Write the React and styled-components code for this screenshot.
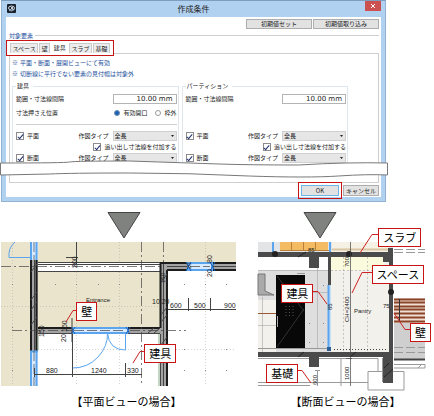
import React, { useState } from 'react';
import styled, { createGlobalStyle } from 'styled-components';

// =======================
// GLOBAL
// =======================
const GlobalStyle = createGlobalStyle`
    * { box-sizing: border-box; }

    body {
        margin: 0;
        background: #fff;
        color: #222;
        font-family: "Noto Sans CJK JP", sans-serif;
        font-size: 6px;
    }

    button, input, select { font: inherit; color: inherit; margin: 0; }
`;

const Page = styled.main`
    overflow: hidden;
`;

// =======================
// DIALOG
// =======================
const Dialog = styled.section`
    position: relative;
    margin: 0 48px 0 1px;
    padding: 0 4px 4px;
    background: #b1d1f0;
    border: 1px solid #93b3d3;
    border-top-color: #7f9dbd;
`;

const TitleBar = styled.header`
    display: grid;
    grid-template-columns: 16px 1fr 16px;
    align-items: start;
    height: 16px;
`;

const Title = styled.h1`
    margin: 0;
    text-align: center;
    font-size: 8px;
    font-weight: 400;
    line-height: 15px;
`;

const AppIcon = styled.svg`
    width: 9px;
    height: 9px;
    margin: 3px 1px;
`;

const CloseButton = styled.button`
    display: flex;
    align-items: center;
    justify-content: center;
    height: 10px;
    padding: 0;
    border: 0;
    background: #cb5050;

    svg { width: 4px; height: 4px; }
`;

const Body = styled.div`
    padding: 2px 2px 1px 3px;
    background: #fff;
`;

const Toolbar = styled.div`
    display: flex;
    justify-content: flex-end;
    gap: 1px;
`;

const Button = styled.button`
    width: ${(p) => p.$width || 66}px;
    height: ${(p) => p.$height || 10}px;
    padding: 0;
    border: 1px solid ${(p) => (p.$primary ? '#6db4e8' : '#adadad')};
    background: #e2e2e2;
    line-height: 8px;
    white-space: nowrap;
    outline: ${(p) => (p.$primary ? '1px solid #c81414' : 'none')};
    outline-offset: 2px;
`;

const GroupTitle = styled.h2`
    display: flex;
    align-items: center;
    gap: 2px;
    margin: 2px 0 0;
    color: #24509c;
    font-size: 6px;
    font-weight: 400;
    line-height: 9px;

    &::after {
        content: "";
        flex: 1;
        height: 1px;
        background: #cfcfcf;
    }
`;

const Tabs = styled.div`
    position: relative;
    display: flex;
    align-items: flex-end;
    gap: 1px;
    width: 108px;
    height: 16px;
    margin: 0 0 -3px -3px;
    padding: 0 3px 2px;
    border: 1px solid #c81414;
    background: #fff;
`;

const Tab = styled.button`
    flex: auto;
    height: ${(p) => (p.$active ? 12 : 10)}px;
    padding: 0;
    border: 1px solid ${(p) => (p.$active ? '#fff' : '#cacaca')};
    border-bottom: 0;
    background: ${(p) => (p.$active ? '#fff' : '#ececec')};
    line-height: 9px;
    white-space: nowrap;
`;

const Panel = styled.div`
    padding: 3px 30px 19px 2px;
    border: 1px solid #cfcfcf;
`;

const Notes = styled.ul`
    margin: 0;
    padding: 0;
    list-style: none;
    color: #24509c;
    line-height: 11px;

    li { display: flex; gap: 2px; }
`;

const Columns = styled.div`
    display: grid;
    grid-template-columns: 1fr 1fr;
    gap: 3px;
    margin-top: 3px;
`;

const Group = styled.fieldset`
    display: flex;
    flex-direction: column;
    min-width: 0;
    margin: 0;
    padding: 3px 1px 0 3px;
    border: 1px solid #dde7ef;
    border-bottom: 0;

    legend {
        padding: 0 4px 0 1px;
        line-height: 8px;
    }
`;

const Row = styled.div`
    display: grid;
    grid-template-columns: 1fr auto 64px;
    align-items: center;
    gap: 4px;
    height: 11px;
    line-height: 11px;
    white-space: nowrap;
`;

const RadioRow = styled.div`
    display: flex;
    align-items: center;
    gap: 8px;
    margin-top: 3px;
    line-height: 11px;
    white-space: nowrap;

    span { flex: 1; }
`;

const Divider = styled.hr`
    width: 100%;
    margin: 6px 0 0;
    border: 0;
    border-top: 1px solid #cfcfcf;
`;

const Targets = styled.div`
    margin-top: auto;
    padding-top: 5px;
`;

const TextBox = styled.input`
    grid-column: 3;
    width: 100%;
    height: 10px;
    padding: 0 3px;
    border: 1px solid #b4b4b4;
    background: #fff;
    font-family: "DejaVu Sans", sans-serif;
    font-size: 7px;
    line-height: 8px;
    text-align: right;
`;

const CheckLabel = styled.label`
    display: flex;
    align-items: center;
    gap: 3px;
    grid-column: ${(p) => (p.$wide ? '1 / 4' : 'auto')};
    justify-content: ${(p) => (p.$wide ? 'flex-end' : 'flex-start')};
`;

const CheckBox = styled.input`
    display: grid;
    place-items: center;
    appearance: none;
    width: 8px;
    height: 8px;
    border: 1px solid #8c8c8c;
    background: #fff;

    &:checked::before {
        content: "";
        width: 2px;
        height: 5px;
        border: solid #1f2f6e;
        border-width: 0 1px 1px 0;
        transform: rotate(40deg);
    }
`;

const Radio = styled.input`
    appearance: none;
    width: 6px;
    height: 6px;
    border: 1px solid #9a9a9a;
    border-radius: 50%;
    background: #fff;

    &:checked {
        border-color: #6b8db5;
        background: #1d62b0;
    }
`;

const SelectBox = styled.div`
    display: grid;
    align-items: center;

    select, svg { grid-area: 1 / 1; }

    select {
        appearance: none;
        width: 100%;
        height: 10px;
        padding: 0 0 0 1px;
        border: 1px solid #d0d0d0;
        border-radius: 0;
        background: #e6e6e6;
        line-height: 8px;
    }

    svg {
        justify-self: end;
        width: 3px;
        height: 2px;
        margin-right: 3px;
        pointer-events: none;
    }
`;

// Torn strip laid over the dialog where its middle part is left out
const Tear = styled.svg`
    position: absolute;
    left: -2px;
    bottom: 23px;
    width: calc(100% + 5px);
    height: 18px;
`;

const Footer = styled.footer`
    display: flex;
    justify-content: flex-end;
    gap: 4px;
    margin-top: 2px;
`;

// =======================
// FIGURES
// =======================
const Figures = styled.div`
    display: grid;
    grid-template-columns: 235fr 167fr;
    gap: 22px;
    padding: 10px 9px 0 1px;
`;

const Figure = styled.figure`
    margin: 0;
`;

const Arrow = styled.svg`
    display: block;
    width: 34px;
    height: 27px;
    margin: 0 0 3px ${(p) => p.$indent}%;
`;

const Canvas = styled.div`
    position: relative;

    > svg { display: block; width: 100%; overflow: visible; }
`;

const Callout = styled.span`
    position: absolute;
    left: ${(p) => p.$x}%;
    top: ${(p) => p.$y}%;
    padding: 0 4px;
    border: 1px solid #c81414;
    background: #fff;
    color: #000;
    font-size: 11px;
    line-height: 17px;
    white-space: nowrap;
`;

const Caption = styled.figcaption`
    padding: 7px 0 0 ${(p) => p.$indent}px;
    color: #000;
    font-size: 11px;
    line-height: 17px;
    text-align: center;
    white-space: nowrap;
`;

const Drawing = styled.svg`
    text {
        font-family: "Liberation Sans", sans-serif;
        font-size: 7px;
        fill: #222;
    }

    .small { font-size: 6px; }
    .line { fill: none; stroke: #444; }
    .thin { fill: none; stroke: #999; }
    .blue { fill: none; stroke: #5aa5ee; }
    .red { fill: none; stroke: #c22; }
`;

const DownArrow = ({ indent }) => (
    <Arrow $indent={indent} viewBox="0 0 34 27" aria-hidden="true">
        <path d="M1 .5H33L17 26Z" fill="#808280" stroke="#444" />
    </Arrow>
);

// =======================
// FORM PARTS
// =======================
const Target = ({ id, name, extra }) => {
    const [checked, setChecked] = useState(true);
    const [chase, setChase] = useState(true);

    return (
        <>
            <Row>
                <CheckLabel>
                    <CheckBox type="checkbox" checked={checked} onChange={() => setChecked(!checked)} />
                    {name}
                </CheckLabel>
                <label htmlFor={id}>作図タイプ</label>
                <SelectBox>
                    <select id={id} defaultValue="全長">
                        <option>全長</option>
                    </select>
                    <svg viewBox="0 0 3 2" aria-hidden="true"><path d="M0 0H3L1.500 2Z" fill="#222" /></svg>
                </SelectBox>
            </Row>
            {extra && (
                <Row>
                    <CheckLabel $wide>
                        <CheckBox type="checkbox" checked={chase} onChange={() => setChase(!chase)} />
                        追い出し寸法線を付加する
                    </CheckLabel>
                </Row>
            )}
        </>
    );
};

const ElementGroup = ({ id, title, children }) => (
    <Group>
        <legend>{title}</legend>
        <Row>
            <label htmlFor={`${id}-range`}>範囲・寸法線間隔</label>
            <TextBox id={`${id}-range`} defaultValue="10.00 mm" />
        </Row>
        {children}
        <Targets>
            <Target id={`${id}-plan`} name="平面" extra />
            <Target id={`${id}-section`} name="断面" />
        </Targets>
    </Group>
);

const tabs = ['スペース', '壁', '建具', 'スラブ', '基礎'];

const ConditionDialog = () => {
    const [tab, setTab] = useState('建具');

    return (
        <Dialog role="dialog" aria-labelledby="dialog-title">
            <TitleBar>
                <AppIcon viewBox="0 0 9 9" aria-hidden="true">
                    <rect width="9" height="9" rx="1" fill="#17202c" />
                    <ellipse cx="4.500" cy="4" rx="3" ry="2" fill="none" stroke="#d7e4ee" />
                    <path d="M2 6.500Q5 8 7.500 5.500" fill="none" stroke="#8fa5b5" />
                    <circle cx="5" cy="4" r="1" fill="#fff" />
                </AppIcon>
                <Title id="dialog-title">作成条件</Title>
                <CloseButton aria-label="閉じる">
                    <svg viewBox="0 0 4 4"><path d="M0 0L4 4M4 0L0 4" stroke="#fff" /></svg>
                </CloseButton>
            </TitleBar>

            <Body>
                <Toolbar>
                    <Button>初期値セット</Button>
                    <Button>初期値取り込み</Button>
                </Toolbar>

                <GroupTitle>対象要素</GroupTitle>
                <Tabs role="tablist">
                    {tabs.map((name) => (
                        <Tab
                            key={name}
                            role="tab"
                            aria-selected={name === tab}
                            $active={name === tab}
                            onClick={() => setTab(name)}
                        >
                            {name}
                        </Tab>
                    ))}
                </Tabs>

                <Panel role="tabpanel">
                    <Notes>
                        <li><span>※</span>平面・断面・展開ビューにて有効</li>
                        <li><span>※</span>切断線に平行でない要素の見付幅は対象外</li>
                    </Notes>
                    <Columns>
                        <ElementGroup id="fitting" title="建具">
                            <RadioRow>
                                <span>寸法押さえ位置</span>
                                <CheckLabel>
                                    <Radio type="radio" name="position" defaultChecked />
                                    有効開口
                                </CheckLabel>
                                <CheckLabel>
                                    <Radio type="radio" name="position" />
                                    枠外
                                </CheckLabel>
                            </RadioRow>
                            <Divider />
                        </ElementGroup>
                        <ElementGroup id="partition" title="パーティション" />
                    </Columns>
                </Panel>

                <Footer>
                    <Button $primary $width={38} $height={11}>OK</Button>
                    <Button $width={36} $height={11}>キャンセル</Button>
                </Footer>
            </Body>

            <Tear viewBox="0 0 390 18" preserveAspectRatio="none" aria-hidden="true">
                <path
                    d="M.5 3Q65 3 70 2T130 1Q190 3 220 4T300 5Q350 2 389.500 3V15Q370 14 340 16T250 16Q190 13 130 13T50 14L.5 15Z"
                    fill="#fff"
                    stroke="#777"
                />
            </Tear>
        </Dialog>
    );
};

// =======================
// FLOOR PLAN
// =======================
const FloorPlan = () => (
    <Drawing viewBox="1 242 235 144" role="img" aria-label="平面ビュー">
        {/* floors */}
        <path d="M1 242H31V386H1ZM37 242H236V263H160V328H37Z" fill="#e9e4cb" />
        <path d="M76.500 242V386M119.500 242V386M205.500 242V386M12.500 242V386M1 306.500H160M38 349.500H236" className="thin" strokeDasharray="1 2" opacity=".4" />
        {[[12, 284], [55, 284], [76, 284], [98, 284], [119, 284], [184, 284], [205, 284], [226, 284], [12, 327], [184, 349], [226, 349], [184, 370], [205, 370], [226, 370], [12, 370]].map(([x, y]) => (
            <rect key={`${x}-${y}`} x={x} y={y} width="1" height="1" fill="#888" />
        ))}

        {/* beam between the walls */}
        <rect x="37" y="262" width="123" height="10" fill="#fff" />
        <path d="M37 262.500H160M37 264.500H160M37 271.500H160" className="line" />

        {/* walls */}
        <path d="M30 242H38V386H30ZM38 327H160V334H38ZM160 262H236V271H167V386H160Z" fill="#a3a3a3" />
        <path d="M31 259V351M36.500 259V351M38 328H160M160 263H236M167 270H236M160.500 263V328M167 270V386" stroke="#1c1c1c" strokeWidth="2" fill="none" />
        <path d="M34.500 259V386M163.500 264V386M167 266.500H236M38 333.500H160M160.500 334V386" className="line" />
        <path d="M31 272L37 264M31 300L37 292M31 310L37 302M31 325L37 317M161 282L167 274M161 315L167 307M148 333L154 328M154 333L160 328M161 345L167 337M161 322L167 315" className="line" />
        <path d="M159 334V386M38 334V350" stroke="#8aa98a" />

        {/* windows */}
        <path d="M30 242H38V260H30ZM30 351H38V386H30ZM72 327H128V334H72ZM188 262H212V271H188Z" fill="#d8eaff" />
        <path d="M31 242V260M36.500 242V260M31 351V386M36.500 351V386M30 351.500H38M72 328H128M72 333H128M188 263H212V270H188Z" className="blue" strokeWidth="2" />
        <path d="M34 242V260M34 351V386M74 330.500H126M190 266.500H210" className="line" opacity=".7" strokeDasharray="10 3" />
        <path d="M71 327L75 334M71 334L75 327M126 327L130 334M126 334L130 327M186 262L191 271M186 271L191 262M210 262L215 271M210 271L215 262" stroke="#1560c0" />

        {/* doors */}
        <path d="M72.500 333V368Q88 368 98 357T107.500 333Q109 350 125.500 350V333M30 257.500H9Q8 248 15 242" className="blue" />

        {/* centre lines */}
        <path d="M1 266.500H160M12 330.500H72M130 330.500H186M141.500 242V386M163.500 242V262" className="line" strokeDasharray="10 3 2 3" opacity=".7" />

        {/* dimensions */}
        <path d="M34 374.500H142M34.500 368V377M72.500 334V377M125.500 363V377M168 309.500H236M188.500 298V311M210.500 298V311M76.500 242V264M66 257.500H78M72 318V342" className="line" />
        <text x="46" y="373">880</text>
        <text x="91" y="373">1240</text>
        <text x="127" y="373">330</text>
        <text x="170" y="308">600</text>
        <text x="194" y="308">500</text>
        <text x="224" y="308">900</text>
        <text x="152" y="304">10 20</text>
        <text className="small" x="86" y="302">Entrance</text>
        <text transform="translate(77 268) rotate(-90)">200</text>
        <text transform="translate(66 342) rotate(-90)">20</text>
        <text transform="translate(67 332) rotate(-90)">160</text>
        <text transform="translate(44 337) rotate(-90)">150</text>
        <text transform="translate(212 277) rotate(-90)">20</text>
        <text transform="translate(212 263) rotate(-90)">80</text>
        <text className="small" transform="translate(191 269) rotate(-90)">20</text>
        <text className="small" transform="translate(165 283) rotate(-90)">150</text>

        {/* leaders */}
        <path d="M77 310.500H73L66 322M145 351.500H140L133 363" className="red" />
    </Drawing>
);

// =======================
// SECTION
// =======================
const Section = () => (
    <Drawing viewBox="258 242 167 144" role="img" aria-label="断面ビュー">
        {/* rooms */}
        <rect x="258" y="242" width="135" height="10" fill="#e2e4e6" />
        <rect x="332" y="242" width="57" height="10" fill="#f5f1e4" />
        <rect x="258" y="270" width="73" height="82" fill="#dedede" />
        <path d="M258 300H276V352H258Z" fill="#f3f1ec" />
        <rect x="331" y="257" width="58" height="95" fill="#f3f1ec" />
        <path d="M331 257H384V270H331Z" fill="#fafadc" />
        <path d="M331 270.500H389M343.500 257V352M367.500 257V352" className="thin" strokeDasharray="2 2" opacity=".5" />
        <path d="M305.500 292.500H328M317.500 268V348M258 270.500H330M262.500 297V352M258 325.500H276" className="thin" opacity=".5" />
        {[[309, 285], [323, 285], [309, 323], [323, 323], [309, 342], [323, 342]].map(([x, y]) => (
            <rect key={`${x}-${y}`} x={x} y={y} width="1" height="1" fill="#888" />
        ))}

        {/* cabinets and hood */}
        <rect x="280" y="242" width="48" height="9" fill="#f3bb62" />
        <path d="M280 250.500H329M291.500 242V251M303.500 242V251M315.500 242V251" stroke="#b8803a" fill="none" />
        <path d="M258 274H265V291L274 295H258Z" fill="#aaa" stroke="#777" />
        <path d="M258 313.500H276" stroke="#9b5a35" />
        <path d="M276 275H305V348H276Z" fill="#080808" />
        <path d="M277 347L304 309M277 276L304 311" stroke="#333" />
        <path d="M286 306V318M289.500 306V318M293 306V318" stroke="#555" strokeDasharray="1 2" />
        <path d="M277.500 316V327" stroke="#aaa" />
        <path d="M297 273.500H305M258 348.500H330" className="thin" />

        {/* louvre and ground outside */}
        <rect x="394" y="298" width="31" height="25" fill="#f1ded4" />
        <path d="M394 299.500H425M394 302.500H425M394 306.500H425M394 309.500H425M394 313.500H425M394 317.500H425M394 321.500H425" stroke="#8a4427" strokeWidth="2" />
        <path d="M399.500 299V321" stroke="#333" />
        <rect x="394" y="323" width="31" height="36" fill="#cfcfcf" />
        <path d="M394 347.500H425M394 352.500H425" className="thin" strokeDasharray="9 3" />
        <path d="M394 359.500H425" className="line" strokeWidth="2" />
        <path d="M394 364.500H425V368H394M418 368L422 364" className="thin" />
        <path d="M394 249.500H425M394 252.500H425" className="thin" strokeDasharray="9 3" />

        {/* footings */}
        <path d="M258 358.500H378V371.500M258 382.500H368M383 371.500H368V390H404V371.500H393M341 358V386M382.500 358V382" className="thin" />
        <path d="M315 370.500H320M317.500 370V386M258 385.500H310" className="thin" />

        {/* structure */}
        <path d="M258 252H383V252H388V248H393V383H383V357H319V367H309V357H258V352H389V262H383V257H319V268H309V257H258Z" fill="#4c4b4b" />
        <path d="M384 377L393 369M384 368L389 363M298 257L306 252M298 357L304 352M350 357L356 352" stroke="#222" />
        <path d="M332 249.500H388" stroke="#d9c5a2" strokeWidth="2" />
        <rect x="328" y="257" width="3" height="28" fill="#4c4b4b" />
        <rect x="328" y="285" width="3" height="64" fill="#c7e1fb" />
        <path d="M328.500 285V349M273 242V252M330 242V252" className="blue" strokeWidth="2" />
        <path d="M334 349.500H388" className="line" strokeDasharray="1 2" />
        <circle cx="391" cy="292" r="3" fill="#222" />
        <circle cx="275" cy="254" r="3" fill="#222" />
        <circle cx="349" cy="254" r="3" fill="#222" />
        <rect x="327" y="347" width="4" height="4" fill="#2d5d93" />

        {/* dimensions */}
        <path d="M350.500 242V386M346 358.500H352" className="line" opacity=".7" />
        <text className="small" transform="translate(349 267) rotate(-90)">700</text>
        <text className="small" transform="translate(349 322) rotate(-90)">CH=2400</text>
        <text className="small" transform="translate(349 380) rotate(-90)">1000</text>
        <text className="small" transform="translate(317 385) rotate(-90)">600</text>
        <text className="small" transform="translate(332 310) rotate(-90)">85</text>
        <text className="small" x="308" y="252">85</text>
        <text className="small" x="383" y="308">75</text>
        <text className="small" x="354" y="313">Pantry</text>

        {/* leaders */}
        <path d="M312 291.500H318L327 304M380 234.500H372L360 253M373 272.500H362L352 293M410 329.500H405L394 313M296 370.500H302L311 383" className="red" />
    </Drawing>
);

const App = () => (
    <Page>
        <GlobalStyle />
        <ConditionDialog />
        <Figures>
            <Figure>
                <DownArrow indent={45} />
                <Canvas>
                    <FloorPlan />
                    <Callout $x={32} $y={42}>壁</Callout>
                    <Callout $x={61} $y={71}>建具</Callout>
                </Canvas>
                <Caption $indent={16}>【平面ビューの場合】</Caption>
            </Figure>
            <Figure>
                <DownArrow indent={27} />
                <Canvas>
                    <Section />
                    <Callout $x={72} $y={-10}>スラブ</Callout>
                    <Callout $x={68} $y={16}>スペース</Callout>
                    <Callout $x={14} $y={29}>建具</Callout>
                    <Callout $x={91} $y={56}>壁</Callout>
                    <Callout $x={5} $y={85}>基礎</Callout>
                </Canvas>
                <Caption $indent={8}>【断面ビューの場合】</Caption>
            </Figure>
        </Figures>
    </Page>
);

export default App;
